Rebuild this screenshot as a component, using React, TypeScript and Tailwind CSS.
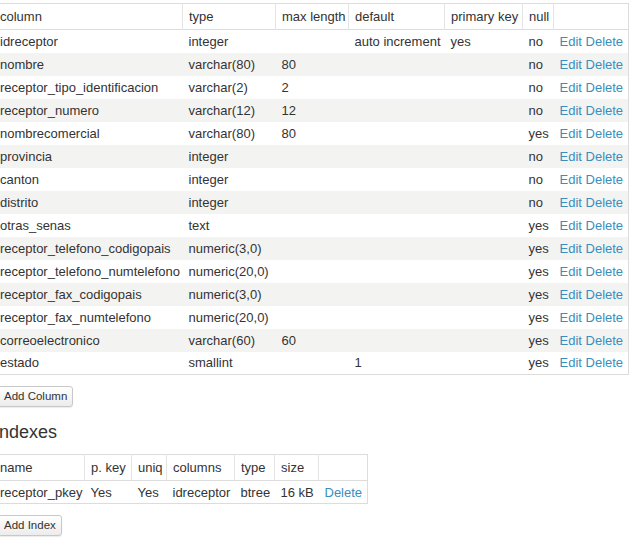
const columns = [
  ["idreceptor", "integer", "", "auto increment", "yes", "no"],
  ["nombre", "varchar(80)", "80", "", "", "no"],
  ["receptor_tipo_identificacion", "varchar(2)", "2", "", "", "no"],
  ["receptor_numero", "varchar(12)", "12", "", "", "no"],
  ["nombrecomercial", "varchar(80)", "80", "", "", "yes"],
  ["provincia", "integer", "", "", "", "no"],
  ["canton", "integer", "", "", "", "no"],
  ["distrito", "integer", "", "", "", "no"],
  ["otras_senas", "text", "", "", "", "yes"],
  ["receptor_telefono_codigopais", "numeric(3,0)", "", "", "", "yes"],
  ["receptor_telefono_numtelefono", "numeric(20,0)", "", "", "", "yes"],
  ["receptor_fax_codigopais", "numeric(3,0)", "", "", "", "yes"],
  ["receptor_fax_numtelefono", "numeric(20,0)", "", "", "", "yes"],
  ["correoelectronico", "varchar(60)", "60", "", "", "yes"],
  ["estado", "smallint", "", "1", "", "yes"],
];

const colHeads = [
  ["column", "w-[188px]"],
  ["type", "w-[93px]"],
  ["max length", "w-[73px]"],
  ["default", "w-[96px]"],
  ["primary key", "w-[78px]"],
  ["null", "w-[31px]"],
  ["", "w-[75px]"],
];

const idxHeads = [
  ["name", "w-[90px]"],
  ["p. key", "w-[47px]"],
  ["uniq", "w-[35px]"],
  ["columns", "w-[68px]"],
  ["type", "w-[40px]"],
  ["size", "w-[44px]"],
  ["", "w-[49px]"],
];

function Btn({ children }: { children: string }) {
  return (
    <button className="ml-[5px] h-[21px] px-[5px] rounded-[3px] border border-[#c8c8c8] bg-gradient-to-b from-white to-[#ececec] text-[11.5px] text-[#333] leading-none shadow-[0_1px_1px_rgba(0,0,0,0.08)]">
      {children}
    </button>
  );
}

function Th({ children, cls, last }: { children: string; cls: string; last?: boolean }) {
  return (
    <th
      className={`${cls} h-[26px] pl-[6px] pr-0 text-left font-normal whitespace-nowrap ${
        last ? "" : "border-r border-[#e4e4e4]"
      }`}
    >
      {children}
    </th>
  );
}

export default function App() {
  return (
    <div className="bg-white min-h-[559px] text-[#333] text-[13px] leading-[15px] font-['Liberation_Sans',Arial,sans-serif] overflow-hidden">
      <div className="-ml-[7px] pt-[3px]">
        <table className="table-fixed w-[636px] border border-[#dcdcdc] border-collapse">
          <thead>
            <tr className="border-b border-[#dcdcdc]">
              {colHeads.map(([h, w], i) => (
                <Th key={i} cls={i === 0 ? "w-[189px]" : w} last={i === colHeads.length - 1}>
                  {h}
                </Th>
              ))}
            </tr>
          </thead>
          <tbody>
            {columns.map((r, i) => (
              <tr key={r[0]} className={i % 2 === 1 ? "bg-[#f3f3f2]" : "bg-white"}>
                {r.map((c, j) => (
                  <td key={j} className="h-[23px] pl-[6px] pr-0 whitespace-nowrap">
                    {c}
                  </td>
                ))}
                <td className="pl-[6px] pr-0 whitespace-nowrap text-[#3a8ebd]">Edit Delete</td>
              </tr>
            ))}
          </tbody>
        </table>

        <div className="mt-[11px]">
          <Btn>Add Column</Btn>
        </div>

        <h3 className="mt-[14px] ml-[1px] text-[18px] leading-[22px]">Indexes</h3>

        <table className="mt-[11px] table-fixed w-[375px] border border-[#dcdcdc] border-collapse">
          <thead>
            <tr className="border-b border-[#dcdcdc]">
              {idxHeads.map(([h, w], i) => (
                <Th key={i} cls={i === 0 ? "w-[91px]" : w} last={i === idxHeads.length - 1}>
                  {h}
                </Th>
              ))}
            </tr>
          </thead>
          <tbody>
            <tr>
              {["receptor_pkey", "Yes", "Yes", "idreceptor", "btree", "16 kB"].map((c, j) => (
                <td key={j} className="h-[23px] pl-[6px] pr-0 whitespace-nowrap">
                  {c}
                </td>
              ))}
              <td className="pl-[6px] pr-0 text-[#3a8ebd]">Delete</td>
            </tr>
          </tbody>
        </table>

        <div className="mt-[11px]">
          <Btn>Add Index</Btn>
        </div>
      </div>
    </div>
  );
}
